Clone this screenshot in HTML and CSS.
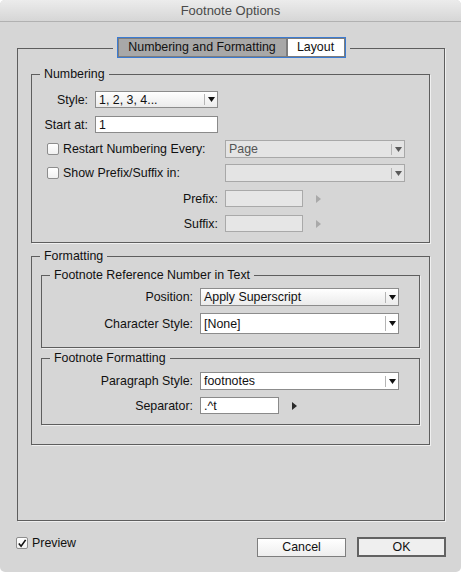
FILE: index.html
```html
<!DOCTYPE html>
<html>
<head>
<meta charset="utf-8">
<title>Footnote Options</title>
<link rel="stylesheet" href="styles.css">
</head>
<body>
<div class="window">
  <div class="titlebar">Footnote Options</div>
  <div class="content">
    <div class="panel">
      <div class="tabbar">
        <div class="tabs">
          <span class="tab active">Numbering and Formatting</span>
          <span class="tab layout">Layout</span>
        </div>
      </div>

      <div class="group numbering">
        <div class="legend">Numbering</div>
        <div class="row r-style">
          <span class="lbl lbl-num">Style:</span>
          <div class="select w-num"><span class="val">1, 2, 3, 4...</span><span class="divider"></span><svg class="tri" width="7" height="5" viewBox="0 0 7 5"><polygon points="0,0 7,0 3.5,5" fill="#111"/></svg></div>
        </div>
        <div class="row r-start">
          <span class="lbl lbl-num">Start at:</span>
          <div class="field w-num">1</div>
        </div>
        <div class="row r-restart">
          <div class="chkwrap"><span class="chk"></span><span>Restart Numbering Every:</span></div>
          <div class="select disabled w-page"><span class="val">Page</span><span class="divider"></span><svg class="tri" width="7" height="5" viewBox="0 0 7 5"><polygon points="0,0 7,0 3.5,5" fill="#5a5a5a"/></svg></div>
        </div>
        <div class="row r-show">
          <div class="chkwrap"><span class="chk"></span><span>Show Prefix/Suffix in:</span></div>
          <div class="select disabled w-page"><span class="val"></span><span class="divider"></span><svg class="tri" width="7" height="5" viewBox="0 0 7 5"><polygon points="0,0 7,0 3.5,5" fill="#5a5a5a"/></svg></div>
        </div>
        <div class="row r-prefix">
          <span class="lbl lbl-pre">Prefix:</span>
          <div class="field disabled w-pre"></div>
          <svg class="rarrow" width="5" height="8" viewBox="0 0 5 8"><polygon points="0,0 5,4 0,8" fill="#a9a9a9"/></svg>
        </div>
        <div class="row r-suffix">
          <span class="lbl lbl-pre">Suffix:</span>
          <div class="field disabled w-pre"></div>
          <svg class="rarrow" width="5" height="8" viewBox="0 0 5 8"><polygon points="0,0 5,4 0,8" fill="#a9a9a9"/></svg>
        </div>
      </div>

      <div class="group formatting">
        <div class="legend">Formatting</div>
        <div class="group sub ref">
          <div class="legend">Footnote Reference Number in Text</div>
          <div class="row r-position">
            <span class="lbl lbl-fmt">Position:</span>
            <div class="select w-fmt"><span class="val">Apply Superscript</span><span class="divider"></span><svg class="tri" width="7" height="5" viewBox="0 0 7 5"><polygon points="0,0 7,0 3.5,5" fill="#111"/></svg></div>
          </div>
          <div class="row r-charstyle">
            <span class="lbl lbl-fmt">Character Style:</span>
            <div class="select white w-fmt"><span class="val">[None]</span><span class="divider tall"></span><svg class="tri" width="7" height="5" viewBox="0 0 7 5"><polygon points="0,0 7,0 3.5,5" fill="#111"/></svg></div>
          </div>
        </div>
        <div class="group sub fmt">
          <div class="legend">Footnote Formatting</div>
          <div class="row r-para">
            <span class="lbl lbl-fmt">Paragraph Style:</span>
            <div class="select white w-fmt"><span class="val">footnotes</span><span class="divider"></span><svg class="tri" width="7" height="5" viewBox="0 0 7 5"><polygon points="0,0 7,0 3.5,5" fill="#111"/></svg></div>
          </div>
          <div class="row r-sep">
            <span class="lbl lbl-fmt">Separator:</span>
            <div class="field w-sep">.^t</div>
            <svg class="rarrow" width="5" height="8" viewBox="0 0 5 8"><polygon points="0,0 5,4 0,8" fill="#2a2a2a"/></svg>
          </div>
        </div>
      </div>
    </div>

    <div class="footer">
      <div class="preview">
        <span class="chk checked"><svg width="11" height="11" viewBox="0 0 11 11"><path d="M2 5.5 L4.5 8.5 L9.5 1.5" fill="none" stroke="#111" stroke-width="1.8"/></svg></span>
        <span>Preview</span>
      </div>
      <div class="buttons">
        <span class="btn">Cancel</span>
        <span class="btn ok">OK</span>
      </div>
    </div>
  </div>
</div>
</body>
</html>
```

FILE: styles.css
```css
* { box-sizing: border-box; }

body {
  margin: 0;
  background: #ffffff;
  font-family: "Liberation Sans", Arial, sans-serif;
  font-size: 12.4px;
  color: #111;
}

.window {
  width: 461px;
  height: 572px;
  background: #d6d6d6;
  border-radius: 5px;
  overflow: hidden;
  display: flex;
  flex-direction: column;
}

.titlebar {
  height: 22px;
  line-height: 21px;
  font-size: 13px;
  text-align: center;
  color: #4a4a4a;
  background: linear-gradient(#ececec, #d6d6d6);
  border-bottom: 1px solid #b1b1b1;
  flex: none;
}

.content {
  flex: 1;
  display: flex;
  flex-direction: column;
  padding: 26px 16px 0 17px;
}

.panel {
  height: 473px;
  flex: none;
  border: 1px solid #5e5e5e;
  box-shadow: 1px 1px 0 #efefef;
  display: flex;
  flex-direction: column;
}

.tabbar {
  display: flex;
  justify-content: center;
  margin-top: -12px;
}

.tabs {
  display: flex;
  border: 1px solid #3b7bd2;
  background: #d6d6d6;
  box-shadow: 0 0 0 4px #d6d6d6;
}

.tab {
  height: 19px;
  line-height: 17px;
  border: 1px solid #7d7d7d;
  text-align: center;
  color: #111;
}

.tab.active { width: 169px; background: #a8a8a8; }
.tab.layout { width: 58px; background: #ffffff; }

.group {
  border: 1px solid #5e5e5e;
  box-shadow: 1px 1px 0 #f0f0f0;
  display: flex;
  flex-direction: column;
  flex: none;
}

.legend {
  align-self: flex-start;
  margin: -9px 0 0 8px;
  padding: 0 4px;
  height: 16px;
  line-height: 16px;
  background: #d6d6d6;
  color: #111;
}

.numbering { margin: 16px 14px 0 13px; height: 169px; }
.formatting { margin: 13px 14px 0 13px; height: 189px; }

.sub { margin-left: 9px; margin-right: 9px; }
.sub.ref { margin-top: 11px; height: 73px; }
.sub.fmt { margin-top: 10px; height: 67px; }

.row { display: flex; align-items: center; flex: none; }

.r-style { margin-top: 9px; height: 17px; }
.r-start { margin-top: 8px; height: 17px; }
.r-restart { margin-top: 7px; height: 18px; }
.r-show { margin-top: 6px; height: 18px; }
.r-prefix { margin-top: 8px; height: 17px; }
.r-suffix { margin-top: 8px; height: 17px; }

.r-position { margin-top: 5px; height: 18px; }
.r-charstyle { margin-top: 7px; height: 21px; }
.r-para { margin-top: 6px; height: 18px; }
.r-sep { margin-top: 7px; height: 17px; }

.lbl { flex: none; text-align: right; margin-right: 7px; white-space: nowrap; }
.lbl-num { width: 56px; }
.lbl-pre { width: 186px; }
.lbl-fmt { width: 151px; }

.chkwrap {
  width: 193px;
  flex: none;
  display: flex;
  align-items: center;
  padding-left: 15px;
  white-space: nowrap;
}

.chk {
  width: 12px;
  height: 12px;
  flex: none;
  border: 1px solid #8d8d8d;
  border-radius: 2px;
  background: linear-gradient(#ffffff, #f0f0f0);
  margin-right: 4px;
  display: flex;
  align-items: center;
  justify-content: center;
}

.select, .field {
  height: 100%;
  flex: none;
  display: flex;
  align-items: center;
  padding-left: 3px;
  border: 1px solid #8c8c8c;
  white-space: nowrap;
}

.select { background: linear-gradient(#ffffff, #ebebeb); }
.select.white { background: #ffffff; }
.select.disabled { background: #e4e4e4; border-color: #a8a8a8; color: #555; }

.field { background: #ffffff; border-color: #8a8a8a; }
.field.disabled { background: #e6e6e6; border-color: #a9a9a9; }

.select .val { flex: 1; }
.select .divider {
  width: 1px;
  height: 11px;
  background: #b5b5b5;
  margin-right: 3px;
}
.select .divider.tall { height: 15px; }
.select .tri { margin-right: 2px; }

.w-num { width: 123px; }
.w-page { width: 180px; }
.w-pre { width: 78px; }
.w-fmt { width: 199px; }
.w-sep { width: 79px; }

.rarrow { margin-left: 13px; flex: none; }

.footer {
  margin: 16px -1px 0 -1px;
  height: 20px;
  display: flex;
  justify-content: space-between;
  align-items: flex-end;
}

.preview {
  align-self: flex-start;
  display: flex;
  align-items: center;
  height: 12px;
}

.preview .chk { margin-right: 4px; }

.buttons { display: flex; align-items: flex-end; gap: 11px; }

.btn {
  width: 89px;
  height: 19px;
  line-height: 17px;
  text-align: center;
  border: 1px solid #7e7e7e;
  background: linear-gradient(#ffffff, #eeeeee);
  color: #111;
}

.btn.ok {
  height: 20px;
  line-height: 16px;
  border: 2px solid #626262;
  background: #efefef;
}
```
